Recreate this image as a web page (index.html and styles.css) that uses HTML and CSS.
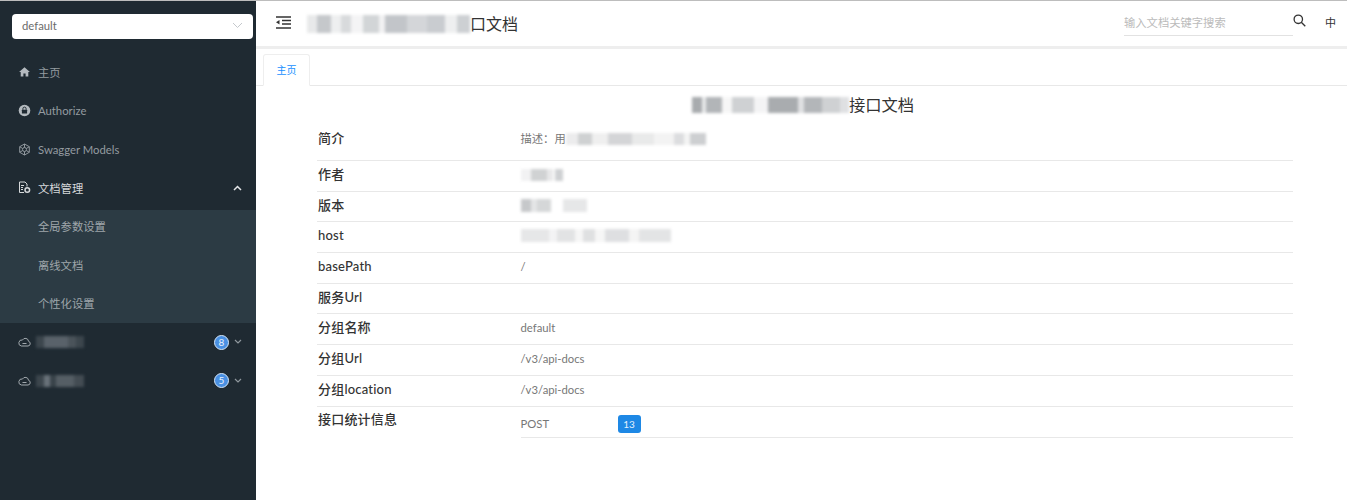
FILE: index.html
```html
<!DOCTYPE html>
<html lang="en">
<head>
  <meta charset="UTF-8">
  <title>接口文档</title>
  <link rel="stylesheet" href="styles.css">
</head>
<body>

  <aside class="sidebar">
    <div class="group-select">
      <span>default</span>
      <svg class="select-arrow" width="11" height="7" viewBox="0 0 11 7"><path d="M1 1l4.5 4.5L10 1" fill="none" stroke="#c4c8cc" stroke-width="1"/></svg>
    </div>

    <nav class="menu">
      <div class="menu-item">
        <svg class="menu-icon" width="12" height="12" viewBox="0 0 12 12"><path d="M6 1.2L.6 6h1.6v4.6h2.7V7.6h2.2v3h2.7V6h1.6z" fill="#b4babf"/></svg>
        <span>主页</span>
      </div>
      <div class="menu-item">
        <svg class="menu-icon" width="13" height="13" viewBox="0 0 13 13"><circle cx="6.5" cy="6.5" r="5.8" fill="#b4babf"/><rect x="3.9" y="5.8" width="5.2" height="3.8" rx=".5" fill="#1f2a32"/><path d="M4.9 5.8V4.7a1.6 1.6 0 0 1 3.2 0v1.100" fill="none" stroke="#1f2a32" stroke-width="1"/></svg>
        <span>Authorize</span>
      </div>
      <div class="menu-item">
        <svg class="menu-icon" width="13" height="13" viewBox="0 0 13 13" fill="none" stroke="#8f979d" stroke-width="1"><path d="M6.500 1l4.800 2.700v5.600L6.500 12 1.700 9.300V3.700z"/><circle cx="6.500" cy="6.500" r="2"/><path d="M6.500 1v3.500M6.500 8.500V12M1.700 3.700l3 1.800M8.300 7.500l3 1.800M11.300 3.700l-3 1.800M4.700 7.500l-3 1.800"/></svg>
        <span>Swagger Models</span>
      </div>
      <div class="menu-item open">
        <svg class="menu-icon" width="13" height="13" viewBox="0 0 13 13" fill="none" stroke="#d5d8da" stroke-width="1"><path d="M6 11.500H1.500V1h5.500l2 2v2.500"/><path d="M3 4.500h3M3 6.500h2M3 8.500h2"/><circle cx="9.300" cy="9" r="2.300" stroke-width="1.500"/></svg>
        <span>文档管理</span>
        <svg class="menu-arrow" width="9" height="6" viewBox="0 0 9 6"><path d="M1 5l3.500-3.500L8 5" fill="none" stroke="#e4e6e8" stroke-width="1.500"/></svg>
      </div>
      <div class="submenu">
        <div class="submenu-item">全局参数设置</div>
        <div class="submenu-item">离线文档</div>
        <div class="submenu-item">个性化设置</div>
      </div>
      <div class="menu-item">
        <svg class="menu-icon" width="13" height="10" viewBox="0 0 13 10"><path d="M3.300 9h6.700a2.400 2.400 0 0 0 .5-4.700A3.200 3.200 0 0 0 4.500 3 2.900 2.900 0 0 0 3.300 9zM4.500 6.500h4" fill="none" stroke="#a2a9ae" stroke-width="1"/></svg>
        <span class="smudge smudge-menu"></span>
        <span class="count">8</span>
        <svg class="count-arrow" width="8" height="6" viewBox="0 0 8 6"><path d="M1 1l3 3 3-3" fill="none" stroke="#8f979d" stroke-width="1.200"/></svg>
      </div>
      <div class="menu-item">
        <svg class="menu-icon" width="13" height="10" viewBox="0 0 13 10"><path d="M3.300 9h6.700a2.400 2.400 0 0 0 .5-4.700A3.200 3.200 0 0 0 4.500 3 2.900 2.900 0 0 0 3.300 9zM4.500 6.500h4" fill="none" stroke="#a2a9ae" stroke-width="1"/></svg>
        <span class="smudge smudge-menu2"></span>
        <span class="count">5</span>
        <svg class="count-arrow" width="8" height="6" viewBox="0 0 8 6"><path d="M1 1l3 3 3-3" fill="none" stroke="#8f979d" stroke-width="1.200"/></svg>
      </div>
    </nav>
  </aside>

  <main class="main">
    <header class="topbar">
      <svg class="collapse-icon" width="15" height="13" viewBox="0 0 15 13"><path d="M0 1h15M6 4.500h9M6 8h9M0 12h15" stroke="#333" stroke-width="1.300"/><path d="M0 6.300l3.500-2.300v4.600z" fill="#333"/></svg>
      <div class="page-title"><span class="smudge smudge-title"></span>口文档</div>
      <div class="search">
        <div class="search-box">输入文档关键字搜索</div>
        <svg class="search-icon" width="13" height="13" viewBox="0 0 13 13" fill="none" stroke="#333" stroke-width="1.300"><circle cx="5.300" cy="5.300" r="4.200"/><path d="M8.300 8.300l4 4"/></svg>
        <span class="lang">中</span>
      </div>
    </header>

    <div class="tabs">
      <div class="tab">主页</div>
    </div>

    <section class="doc">
      <h1 class="doc-title"><span class="smudge smudge-doc"></span>接口文档</h1>
      <div class="row row-first">
        <div class="label">简介</div>
        <div class="value">描述：用<span class="smudge smudge-desc"></span></div>
      </div>
      <div class="row">
        <div class="label">作者</div>
        <div class="value"><span class="smudge smudge-author"></span></div>
      </div>
      <div class="row">
        <div class="label">版本</div>
        <div class="value"><span class="smudge smudge-version"></span></div>
      </div>
      <div class="row">
        <div class="label">host</div>
        <div class="value"><span class="smudge smudge-host"></span></div>
      </div>
      <div class="row">
        <div class="label">basePath</div>
        <div class="value">/</div>
      </div>
      <div class="row">
        <div class="label">服务Url</div>
        <div class="value"></div>
      </div>
      <div class="row">
        <div class="label">分组名称</div>
        <div class="value">default</div>
      </div>
      <div class="row">
        <div class="label">分组Url</div>
        <div class="value">/v3/api-docs</div>
      </div>
      <div class="row">
        <div class="label">分组location</div>
        <div class="value">/v3/api-docs</div>
      </div>
      <div class="row row-last">
        <div class="label">接口统计信息</div>
        <div class="value stat">
          <span class="stat-name">POST</span>
          <span class="stat-count">13</span>
        </div>
      </div>
    </section>
  </main>

</body>
</html>
```

FILE: styles.css
```css
* {
  box-sizing: border-box;
}

body {
  display: flex;
  width: 1347px;
  height: 500px;
  margin: 0;
  overflow: hidden;
  border-top: 1px solid #bdbdbd;
  background: #fff;
  font-family: Lato, "Noto Sans CJK SC", sans-serif;
  font-size: 11.300px;
  color: #666;
}

/* sidebar */
.sidebar {
  flex: 0 0 256px;
  padding-top: 13px;
  background: #1f2a32;
}

.group-select {
  display: flex;
  align-items: center;
  justify-content: space-between;
  width: 241px;
  height: 25px;
  margin-left: 12px;
  padding: 0 10px 2px;
  border-radius: 4px;
  background: #fff;
  color: #6b6b6b;
}

.menu {
  margin-top: 14px;
}

.menu-item {
  display: flex;
  align-items: center;
  height: 38.5px;
  padding-left: 18px;
  color: #949ba0;
}

.menu-item.open {
  color: #d5d8da;
}

.menu-icon {
  flex: 0 0 13px;
  margin-right: 7px;
}

.menu-arrow {
  margin-left: auto;
  margin-right: 14px;
}

.submenu {
  height: 113px;
  margin-top: 3px;
  background: #2c3b44;
}

.submenu-item {
  display: flex;
  align-items: center;
  height: 38.5px;
  padding: 0 0 6px 38px;
  color: #9fa6ab;
}

.count {
  width: 15px;
  height: 15px;
  margin-left: auto;
  border: 1px solid #d5e6f8;
  border-radius: 50%;
  background: #4a90e2;
  color: #e8f1fb;
  font-size: 10px;
  line-height: 13px;
  text-align: center;
}

.count-arrow {
  margin: 0 14px 0 5px;
}

/* blurred bits of the screenshot */
.smudge {
  display: inline-block;
  filter: blur(1.500px);
}

.smudge-menu {
  width: 48px;
  height: 12px;
  margin-left: -2px;
  background: linear-gradient(90deg, #3c464d 0 8px, #59626a 8px 32px, #4a535a 32px 40px, #3c464d 40px);
}

.smudge-menu2 {
  width: 48px;
  height: 12px;
  margin-left: -2px;
  background: linear-gradient(90deg, #3c464d 0 8px, #69727a 8px 14px, #39434a 14px 20px, #555e65 20px 38px, #434c53 38px);
}

.smudge-title {
  width: 163px;
  height: 18px;
  vertical-align: -3px;
  background: linear-gradient(90deg, #e8e9ea 0 10px, #c5c8cb 10px 24px, #eeeff0 24px 34px, #d8dadc 34px 44px, #f4f4f5 44px 56px, #d2d5d7 56px 72px, #f2f2f3 72px 78px, #c2c5c9 78px 100px, #d4d6d9 100px 120px, #c9ccd0 120px 138px, #eeeff0 138px 150px, #cdd0d3 150px);
}

.smudge-doc {
  width: 157px;
  height: 16px;
  vertical-align: -2px;
  background: linear-gradient(90deg, #a8abae 0 10px, #e9eaeb 10px 14px, #b2b5b8 14px 30px, #f6f6f6 30px 40px, #cfd1d3 40px 62px, #f4f4f5 62px 76px, #a9acaf 76px 106px, #e0e1e3 106px 112px, #b3b6b9 112px 130px, #cfd1d3 130px 148px, #dfe0e2 148px);
}

.smudge-desc {
  width: 140px;
  height: 12px;
  vertical-align: -2px;
  background: linear-gradient(90deg, #ececed 0 12px, #cfd1d2 12px 26px, #efefef 26px 42px, #d4d5d7 42px 66px, #e9eaea 66px 88px, #f3f3f3 88px 108px, #dcdddf 108px 118px, #f4f4f4 118px 124px, #cdcfd1 124px);
}

.smudge-author {
  width: 42px;
  height: 12px;
  vertical-align: -2px;
  background: linear-gradient(90deg, #f2f2f3 0 10px, #d0d2d3 10px 26px, #e8e8e9 26px 32px, #fff 32px 34px, #cfd1d3 34px);
}

.smudge-version {
  width: 66px;
  height: 13px;
  vertical-align: -2px;
  background: linear-gradient(90deg, #c6c8ca 0 10px, #e4e5e6 10px 16px, #d5d7d8 16px 30px, #fff 30px 42px, #e6e7e8 42px);
}

.smudge-host {
  width: 150px;
  height: 13px;
  vertical-align: -2px;
  background: linear-gradient(90deg, #e6e7e8 0 28px, #f3f3f4 28px 36px, #e2e3e4 36px 54px, #f6f6f6 54px 62px, #dfe0e1 62px 74px, #f6f6f6 74px 84px, #dedfe1 84px 108px, #f4f4f4 108px 118px, #e3e4e5 118px);
}

/* main */
.main {
  flex: 1;
  min-width: 0;
}

.topbar {
  display: flex;
  align-items: center;
  height: 48px;
  padding: 0 11px 2px 20px;
  border-bottom: 3px solid #eee;
}

.page-title {
  margin-left: 16px;
  font-size: 16px;
  color: #333;
}

.search {
  display: flex;
  align-items: center;
  margin-left: auto;
}

.search-box {
  width: 169px;
  height: 27px;
  padding-top: 5px;
  border-bottom: 1px solid #e2e2e2;
  color: #bbb;
}

.search-icon {
  margin: -4px 0 0;
}

.lang {
  margin: -2px 0 0 19px;
  font-size: 11px;
  color: #333;
}

.tabs {
  height: 37px;
  padding: 5px 0 0 7px;
  border-bottom: 1px solid #e8e8e8;
}

.tab {
  width: 47px;
  height: 32px;
  border: 1px solid #eee;
  border-bottom: 1px solid #fff;
  border-radius: 3px 3px 0 0;
  background: #fff;
  color: #1890ff;
  font-size: 10px;
  line-height: 30px;
  text-align: center;
}

.doc {
  margin: 0 54px 0 61px;
}

.doc-title {
  margin: 7px 0 0;
  padding-left: 375px;
  font-size: 16.300px;
  font-weight: 400;
  line-height: 24px;
  color: #333;
}

.row {
  display: flex;
  height: 30.700px;
  border-bottom: 1px solid #e8e8e8;
}

.row-first {
  height: 44px;
  padding-top: 8px;
}

.row-last {
  height: 31px;
  border-bottom: 0;
}

.label {
  flex: 0 0 203.500px;
  padding-left: 1px;
  font-size: 13px;
  font-weight: 500;
  letter-spacing: .2px;
  line-height: 26px;
  color: #333;
}

.row-last .label {
  line-height: 24px;
}

.value {
  flex: 1;
  padding-top: 2px;
  line-height: 24px;
  color: #777;
}

.stat {
  display: flex;
  align-items: center;
  height: 31px;
  padding-top: 4px;
  border-bottom: 1px solid #e8e8e8;
}

.stat-name {
  width: 97px;
}

.stat-count {
  width: 23px;
  height: 18px;
  border-radius: 3px;
  background: #1e88e5;
  color: #e3f1fd;
  font-size: 10px;
  line-height: 18px;
  text-align: center;
}
```
